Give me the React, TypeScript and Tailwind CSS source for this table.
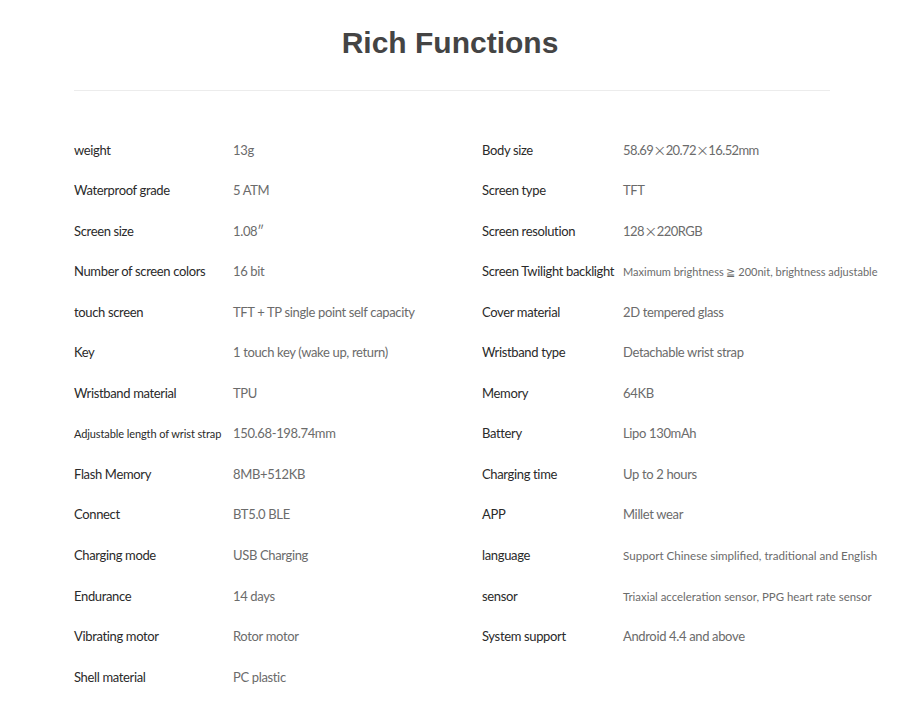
type Row = [string, string, string?, string?];

const left: Row[] = [
  ['weight', '13g'],
  ['Waterproof grade', '5 ATM'],
  ['Screen size', '1.08\u2033'],
  ['Number of screen colors', '16 bit'],
  ['touch screen', 'TFT + TP single point self capacity'],
  ['Key', '1 touch key (wake up, return)'],
  ['Wristband material', 'TPU'],
  ['Adjustable length of wrist strap', '150.68-198.74mm', 'text-[11px] tracking-[-0.1px]'],
  ['Flash Memory', '8MB+512KB'],
  ['Connect', 'BT5.0 BLE'],
  ['Charging mode', 'USB Charging'],
  ['Endurance', '14 days'],
  ['Vibrating motor', 'Rotor motor'],
  ['Shell material', 'PC plastic'],
];

const right: Row[] = [
  ['Body size', '58.69\u00d720.72\u00d716.52mm', undefined, 'text-[13px] tracking-[-0.6px]'],
  ['Screen type', 'TFT'],
  ['Screen resolution', '128\u00d7220RGB', undefined, 'text-[13px] tracking-[-0.5px]'],
  ['Screen Twilight backlight', 'Maximum brightness \u2267 200nit, brightness adjustable', undefined, 'text-[11px]'],
  ['Cover material', '2D tempered glass'],
  ['Wristband type', 'Detachable wrist strap'],
  ['Memory', '64KB'],
  ['Battery', 'Lipo 130mAh'],
  ['Charging time', 'Up to 2 hours'],
  ['APP', 'Millet wear'],
  ['language', 'Support Chinese simplified, traditional and English', undefined, 'text-[11.6px]'],
  ['sensor', 'Triaxial acceleration sensor, PPG heart rate sensor', undefined, 'text-[11.4px]'],
  ['System support', 'Android 4.4 and above'],
];

// the source uses a wide CJK multiplication sign
function Value({ text }: { text: string }) {
  const parts = text.split('\u00d7');
  return (
    <>
      {parts.map((p, i) => (
        <span key={i}>
          {i > 0 && <span className="font-['Noto_Sans_CJK_SC',sans-serif]">{'\u00d7'}</span>}
          {p}
        </span>
      ))}
    </>
  );
}

function SpecColumn({ rows, labelWidth }: { rows: Row[]; labelWidth: string }) {
  return (
    <div className="flex flex-col">
      {rows.map(([label, value, labelCls, valueCls]) => (
        <div key={label} className="flex items-center h-[40.55px]">
          <span className={`${labelWidth} shrink-0 whitespace-nowrap text-[#2a2a2a] ${labelCls ?? 'text-[13px] tracking-[-0.35px]'}`}>
            {label}
          </span>
          <span className={`whitespace-nowrap text-[#6b6b6b] ${valueCls ?? 'text-[13px] tracking-[-0.35px]'}`}>
            <Value text={value} />
          </span>
        </div>
      ))}
    </div>
  );
}

export default function App() {
  return (
    <div className="w-[900px] h-[709px] bg-white overflow-hidden font-['Lato','Open_Sans',sans-serif]">
      <h1 className="pt-[24px] text-center text-[30px] leading-[38px] font-bold text-[#444] font-['Liberation_Sans',Arial,sans-serif]">
        Rich Functions
      </h1>
      <div className="mx-[74px] mt-[28px] h-px w-[756px] bg-[#ececec]" />
      <div className="mt-[39px] ml-[74px] flex">
        <div className="w-[408px]">
          <SpecColumn rows={left} labelWidth="w-[159px]" />
        </div>
        <SpecColumn rows={right} labelWidth="w-[141px]" />
      </div>
    </div>
  );
}
